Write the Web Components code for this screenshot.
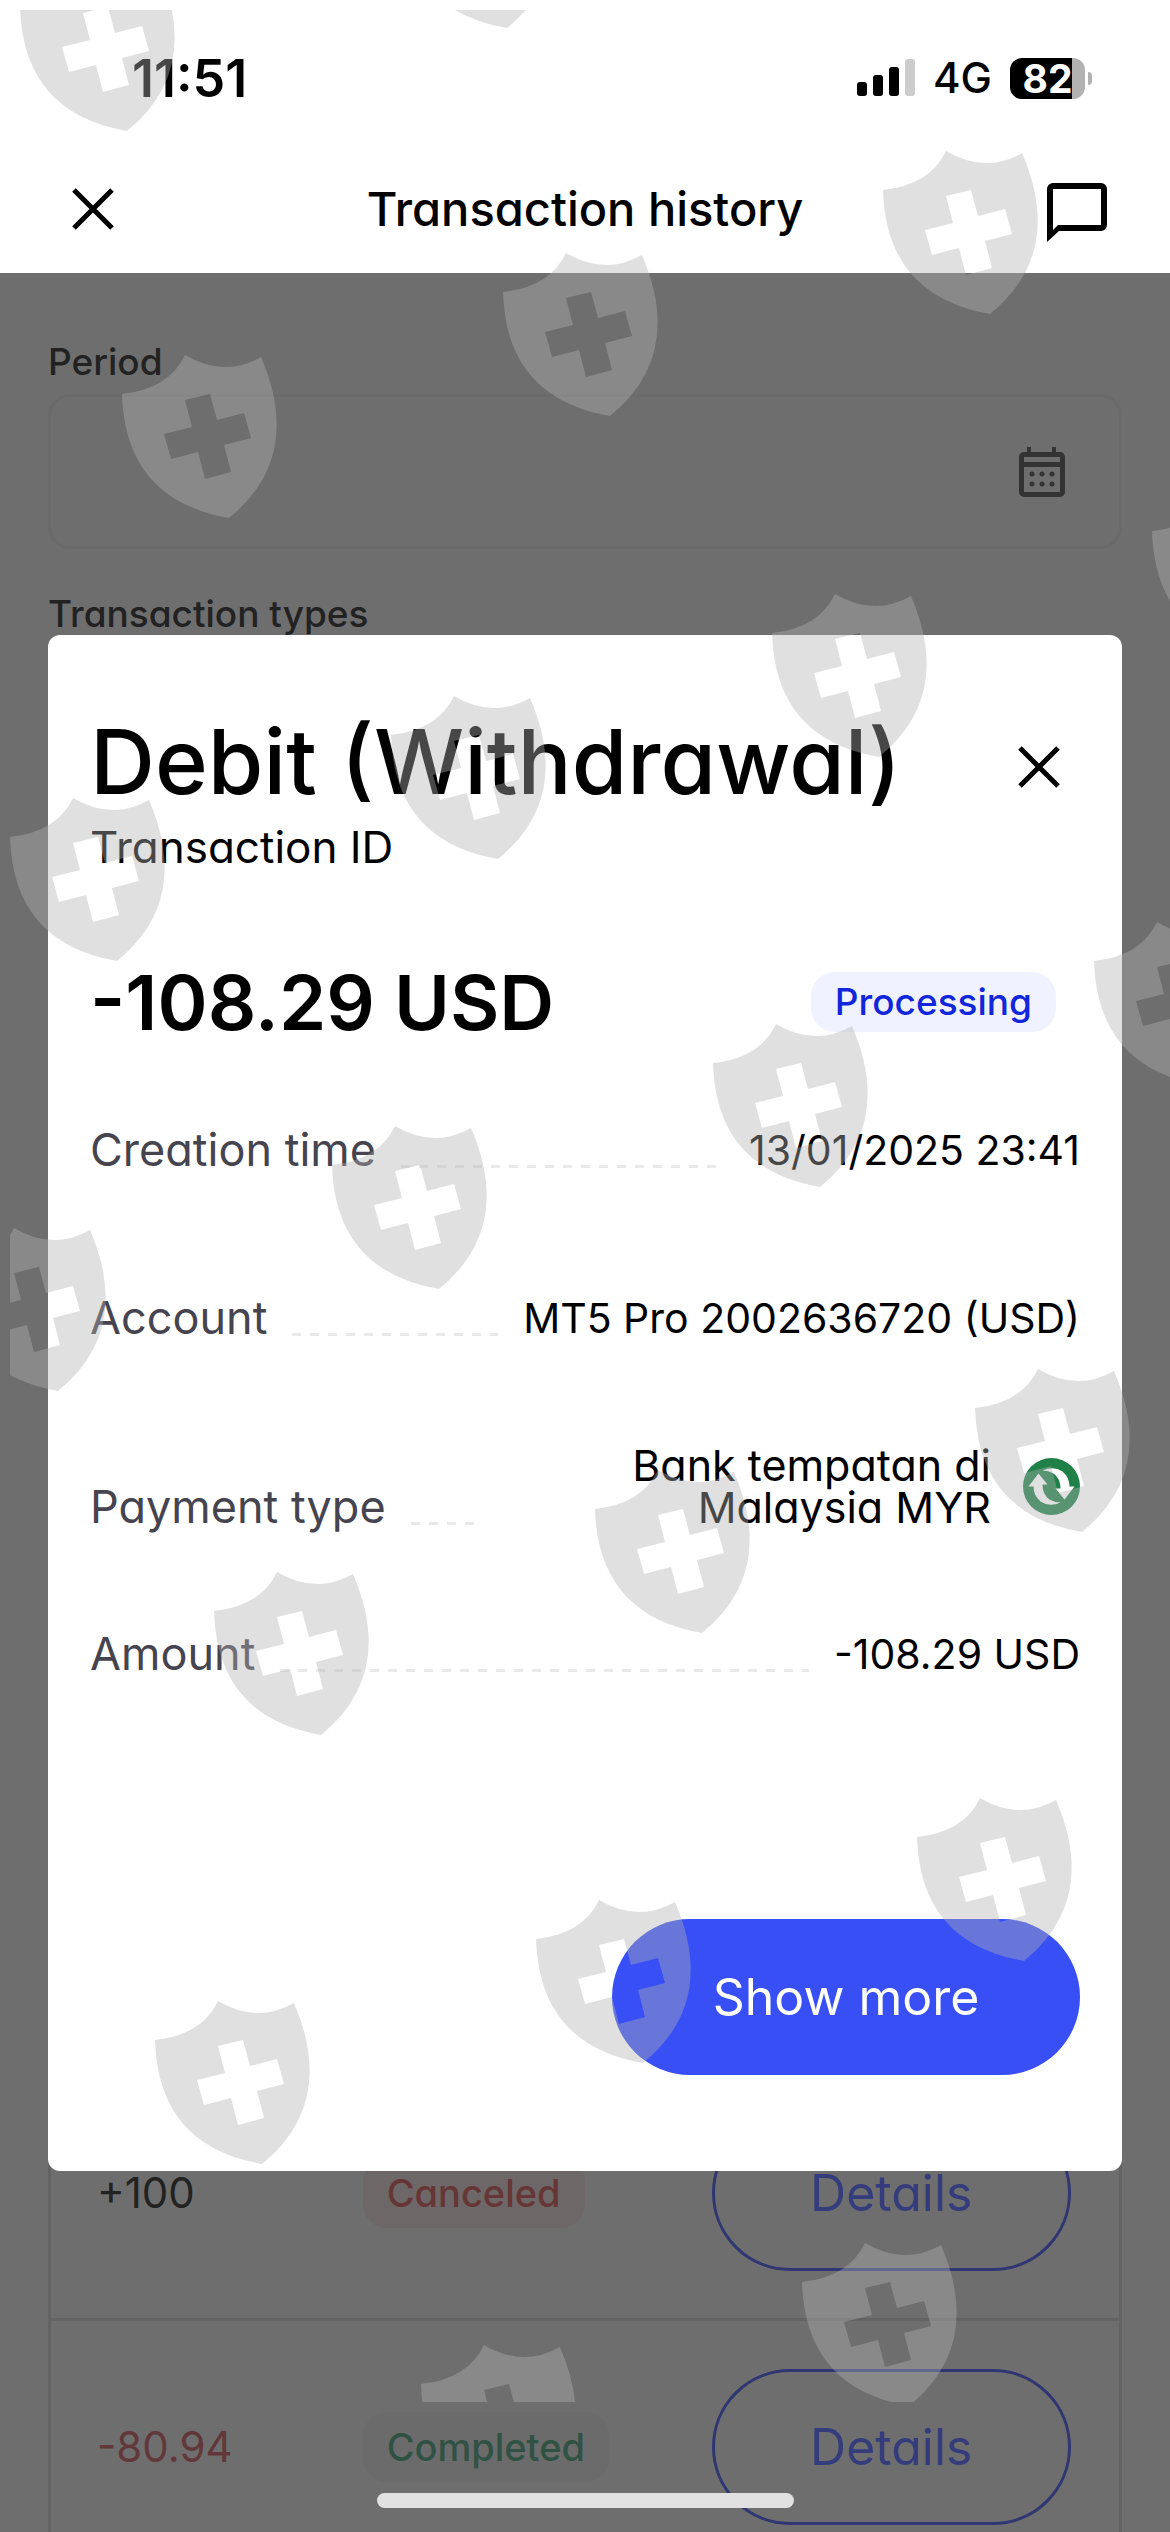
<!DOCTYPE html>
<html lang="en">
<head>
<meta charset="utf-8">
<meta name="viewport" content="width=device-width, initial-scale=1">
<title>Transaction history</title>
<style>
  html, body { margin: 0; height: 100%; }
  body { font-family: Inter, "Open Sans", sans-serif; font-feature-settings: "cv11"; color: #000; background: #fff; overflow: hidden; }
</style>
</head>
<body>
<history-app></history-app>
<script>
const define = (name, html) => {
  const template = document.createElement('template');
  template.innerHTML = '<style>*{box-sizing:border-box}button{font:inherit;font-feature-settings:inherit;color:inherit;background:none;border:0;padding:0}svg{display:block}</style>' + html;
  customElements.define(name, class extends HTMLElement {
    constructor() {
      super();
      this.attachShadow({ mode: 'open' }).append(template.content.cloneNode(true));
    }
  });
};

define('status-bar', `
<style>
  :host { display: flex; align-items: center; justify-content: space-between; height: 156px; padding: 0 78px 0 132px; }
  time { font-size: 52px; font-weight: 600; }
  .right { display: flex; align-items: center; gap: 18px; }
  .net { font-size: 42px; font-weight: 500; line-height: 42px; }
  .battery { display: flex; align-items: center; gap: 3px; }
  .cell { width: 75px; height: 41px; border-radius: 12px; background: linear-gradient(90deg, #000 62px, #b2b2b2 62px); color: #fff; font-size: 39px; font-weight: 700; line-height: 41px; text-align: center; }
  .nub { width: 4px; height: 13px; border-radius: 0 4px 4px 0; background: #b2b2b2; }
</style>
<time>11:51</time>
<div class="right">
  <svg width="58" height="38" viewBox="0 0 58 38"><rect y="23" width="10" height="14" rx="3"/><rect x="16" y="16" width="10" height="21" rx="3"/><rect x="32" y="8" width="10" height="29" rx="3"/><rect x="48" width="10" height="37" rx="3" fill="#ccc"/></svg>
  <span class="net">4G</span>
  <div class="battery"><div class="cell">82</div><div class="nub"></div></div>
</div>`);

define('close-icon', `
<style>:host { display: block; }</style>
<svg width="42" height="42" viewBox="0 0 42 42" fill="none" stroke="#000" stroke-width="5"><path d="M2 2 40 40M40 2 2 40"/></svg>`);

define('app-header', `
<style>
  :host { display: grid; grid-template-columns: 1fr auto 1fr; align-items: center; height: 117px; padding-bottom: 11px; }
  h1 { margin: 0; font-size: 47px; line-height: 56px; font-weight: 500; }
  .close { justify-self: start; margin-left: 72px; }
  .chat { justify-self: end; margin-right: 63px; padding-top: 6px; }
</style>
<button class="close" aria-label="Close"><close-icon></close-icon></button>
<h1>Transaction history</h1>
<button class="chat" aria-label="Chat"><svg width="60" height="60" viewBox="0 0 60 60"><path fill-rule="evenodd" d="M6 1H54a6 6 0 0 1 6 6V43a6 6 0 0 1-6 6H12L0 60V7a6 6 0 0 1 6-6ZM6 7V48L11 43H54V7Z"/></svg></button>`);

define('period-field', `
<style>
  :host { display: flex; flex-direction: column; gap: 12px; }
  label { font-size: 37px; line-height: 40px; font-weight: 500; color: #222; }
  .box { display: flex; align-items: center; height: 155px; padding-right: 54px; border: 3px solid #6a6a6a; border-radius: 22px; }
  input { flex: 1; min-width: 0; height: 100%; padding: 0 30px; border: 0; background: none; font: inherit; }
</style>
<label for="period">Period</label>
<div class="box">
  <input id="period" type="text">
  <button aria-label="Open calendar"><svg width="46" height="50" viewBox="0 0 46 50" fill="#333"><path fill-rule="evenodd" d="M8 0H12V5H33V0H37V5H41a5 5 0 0 1 5 5V45a5 5 0 0 1-5 5H5a5 5 0 0 1-5-5V10A5 5 0 0 1 5 5H8ZM5 10V15H41V10ZM5 20V45H41V20Z"/><circle cx="13" cy="27" r="2.5"/><circle cx="23" cy="27" r="2.5"/><circle cx="33" cy="27" r="2.5"/><circle cx="13" cy="37" r="2.5"/><circle cx="23" cy="37" r="2.5"/><circle cx="33" cy="37" r="2.5"/></svg></button>
</div>`);

define('type-field', `
<style>
  :host { display: flex; flex-direction: column; gap: 12px; }
  label { font-size: 37px; line-height: 40px; font-weight: 500; color: #222; }
  select { appearance: none; height: 155px; border: 3px solid #6a6a6a; border-radius: 22px; background: none; }
</style>
<label for="types">Transaction types</label>
<select id="types"></select>`);

define('status-badge', `
<style>
  :host { display: inline-flex; align-items: center; height: 70px; padding: 0 24px; border-radius: 24px; font-size: 38px; line-height: 40px; font-weight: 500; background: #6b6b6b; color: #2f5244; }
  :host([kind="canceled"]) { background: #6d6767; color: #663536; }
  :host([kind="processing"]) { height: 60px; font-size: 37px; background: #f0f3ff; color: #1226db; }
</style>
<slot></slot>`);

define('history-table', `
<style>
  :host { display: block; }
  table { width: 100%; border-collapse: collapse; }
  tr { height: 254px; border: 3px solid #636363; }
  td { padding: 0; vertical-align: middle; }
  td:first-child { width: 27%; padding-left: 46px; font-size: 42px; color: #222; }
  td:nth-child(2) { padding-left: 24px; }
  td:last-child { width: 409px; padding-right: 48px; }
  td.negative:first-child { color: #62373a; }
  button { display: block; width: 100%; height: 156px; border: 3px solid #2f3672; border-radius: 78px; color: #343c7c; font-size: 50px; line-height: 60px; }
</style>
<table>
  <tr><td>+100</td><td><status-badge kind="canceled">Canceled</status-badge></td><td><button>Details</button></td></tr>
  <tr><td class="negative">-80.94</td><td><status-badge kind="completed">Completed</status-badge></td><td><button>Details</button></td></tr>
</table>`);

define('detail-row', `
<style>
  :host { display: flex; align-items: flex-end; line-height: 42px; font-size: 45px; }
  :host([spaced]) { padding-bottom: 21px; }
  .label { color: #45444f; white-space: nowrap; }
  .leader { flex: 1; min-width: 60px; height: 3px; margin: 0 25px 3px; background: repeating-linear-gradient(90deg, #e9e9ec 0 9px, transparent 9px 18px); }
  .value { display: flex; align-items: center; text-align: right; font-size: 41px; }
</style>
<span class="label"><slot name="label"></slot></span>
<span class="leader"></span>
<span class="value"><slot></slot></span>`);

define('exchange-icon', `
<style>:host { display: block; }</style>
<svg width="57" height="57" viewBox="-28.5 -28.5 57 57"><circle r="28.5" fill="#1f8048"/><g fill="#fff"><path d="M-9-16Q2-21 11-15Q18-9 18 0H23L13 13 4 2H9Q9-8 2-13Q-3-16-9-16Z"/><path transform="rotate(180)" d="M-9-16Q2-21 11-15Q18-9 18 0H23L13 13 4 2H9Q9-8 2-13Q-3-16-9-16Z"/></g></svg>`);

define('transaction-dialog', `
<style>
  :host { display: flex; flex-direction: column; padding: 79px 42px 96px; border-radius: 12px; background: #fff; }
  .top { display: flex; align-items: center; justify-content: space-between; padding-right: 20px; }
  .top button { padding-top: 10px; }
  h2 { margin: 0; font-size: 90px; line-height: 96px; font-weight: 500; }
  .id { margin: 13px 0 0; font-size: 44px; line-height: 48px; }
  .sum { display: flex; align-items: center; justify-content: space-between; height: 80px; margin-top: 91px; padding-right: 24px; font-size: 76px; line-height: 80px; font-weight: 600; }
  .rows { display: flex; flex-direction: column; gap: 105px; margin-top: 87px; }
  .bank { display: flex; align-items: center; gap: 32px; font-size: 43px; }
  .name { width: 486px; }
  .more { align-self: flex-end; width: 468px; height: 156px; margin-top: 244px; border-radius: 78px; background: #374ff5; color: #fff; font-size: 50px; line-height: 60px; }
</style>
<div class="top"><h2>Debit (Withdrawal)</h2><button aria-label="Close details"><close-icon></close-icon></button></div>
<p class="id">Transaction ID</p>
<div class="sum"><span>-108.29 USD</span><status-badge kind="processing">Processing</status-badge></div>
<div class="rows">
  <detail-row spaced><span slot="label">Creation time</span>13/01/2025 23:41</detail-row>
  <detail-row><span slot="label">Account</span>MT5 Pro 2002636720 (USD)</detail-row>
  <detail-row><span slot="label">Payment type</span><span class="bank"><span class="name">Bank tempatan di<br>Malaysia MYR</span><exchange-icon></exchange-icon></span></detail-row>
  <detail-row><span slot="label">Amount</span>-108.29 USD</detail-row>
</div>
<button class="more">Show more</button>`);

define('shield-layer', `
<style>:host { display: block; pointer-events: none; } svg { width: 100%; height: 100%; }</style>
<svg viewBox="0 0 1170 2532" preserveAspectRatio="xMidYMin slice" aria-hidden="true">
  <defs>
    <clipPath id="area"><rect x="10" y="10" width="1160" height="2392"/></clipPath>
    <path id="shield" fill-rule="evenodd" d="M0 0Q47-5 63-39Q102-16 139-37Q182 63 107 124Q3 106 0 0ZM63 6 88 0 95 26 122 19 129 44 102 51 109 78 83 85 76 58 49 65 42 40 70 33Z"/>
  </defs>
  <g clip-path="url(#area)" fill="#b2b2b2" fill-opacity=".4">
    ${[[20,7],[400,-96],[883,190],[503,292],[122,394],[1152,531],[772,633],[391,735],[10,837],[1094,961],[713,1063],[332,1165],[-49,1267],[975,1408],[595,1509],[214,1611],[917,1837],[536,1939],[155,2040],[802,2282],[421,2384]]
      .map(([x, y]) => `<use href="#shield" x="${x}" y="${y}"/>`).join('')}
  </g>
</svg>`);

define('history-app', `
<style>
  :host { position: relative; display: flex; flex-direction: column; height: 100vh; overflow: hidden; }
  main { flex: 1; display: flex; flex-direction: column; gap: 45px; padding: 69px 48px 0; background: #6e6e6e; }
  history-table { margin-top: auto; margin-bottom: -43px; }
  transaction-dialog { position: absolute; top: 635px; left: 48px; right: 48px; }
  shield-layer { position: absolute; inset: 0; }
  .home { position: absolute; bottom: 24px; left: 0; right: 0; width: 417px; height: 15px; margin: 0 auto; border-radius: 8px; background: #e1e1e1; }
</style>
<status-bar></status-bar>
<app-header></app-header>
<main>
  <period-field></period-field>
  <type-field></type-field>
  <history-table></history-table>
</main>
<transaction-dialog></transaction-dialog>
<shield-layer></shield-layer>
<div class="home"></div>`);
</script>
</body>
</html>
